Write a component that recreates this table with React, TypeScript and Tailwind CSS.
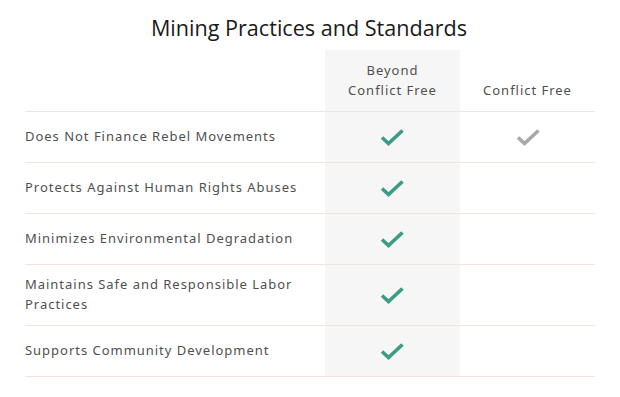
import React from 'react';

const rows = [
  { label: 'Does Not Finance Rebel Movements', conflictFree: true },
  { label: 'Protects Against Human Rights Abuses', conflictFree: false },
  { label: 'Minimizes Environmental Degradation', conflictFree: false },
  { label: 'Maintains Safe and Responsible Labor Practices', conflictFree: false },
  { label: 'Supports Community Development', conflictFree: false },
];

function Check({ color }: { color: string }) {
  return (
    <svg width="24" height="18" viewBox="0 0 24 18" fill="none">
      <path d="M2 9.5 L8.5 15.5 L22.5 2.5" stroke={color} strokeWidth="3.6" strokeLinecap="butt" strokeLinejoin="miter" />
    </svg>
  );
}

export default function App() {
  return (
    <div className="w-[620px] h-[397px] bg-white font-['Noto_Sans',sans-serif] text-[#505050]">
      {/* Title */}
      <h1 className="h-[50px] pt-[13px] pr-[2px] text-center font-['Open_Sans',sans-serif] text-[21.6px] leading-[30px] text-[#1a1a1a]">
        Mining Practices and Standards
      </h1>

      {/* Comparison table */}
      <div className="mx-[25px] grid grid-cols-[300px_135px_135px] text-[13px] leading-[20px] tracking-[0.075em]">
        {/* Header row */}
        <div className="h-[62px] border-b border-[#efe6df]" />
        <div className="h-[62px] bg-[#f6f6f6] border-b border-[#efe6df] flex flex-col items-center justify-end pb-[11px] text-center">
          <span>Beyond</span>
          <span>Conflict Free</span>
        </div>
        <div className="h-[62px] border-b border-[#efe6df] flex items-end justify-center pb-[11px]">
          Conflict Free
        </div>

        {rows.map((row, i) => {
          const h = i === 3 ? 'h-[61px]' : 'h-[51px]';
          return (
            <React.Fragment key={row.label}>
              <div className={`${h} border-b border-[#efe6df] flex items-center pr-[12px] pb-[2px]`}>
                {row.label}
              </div>
              <div className={`${h} bg-[#f6f6f6] border-b border-[#efe6df] flex items-center justify-center pr-[2px]`}>
                <Check color="#3b9c87" />
              </div>
              <div className={`${h} border-b border-[#efe6df] flex items-center justify-center`}>
                {row.conflictFree && <Check color="#a9a9a9" />}
              </div>
            </React.Fragment>
          );
        })}
      </div>
    </div>
  );
}
